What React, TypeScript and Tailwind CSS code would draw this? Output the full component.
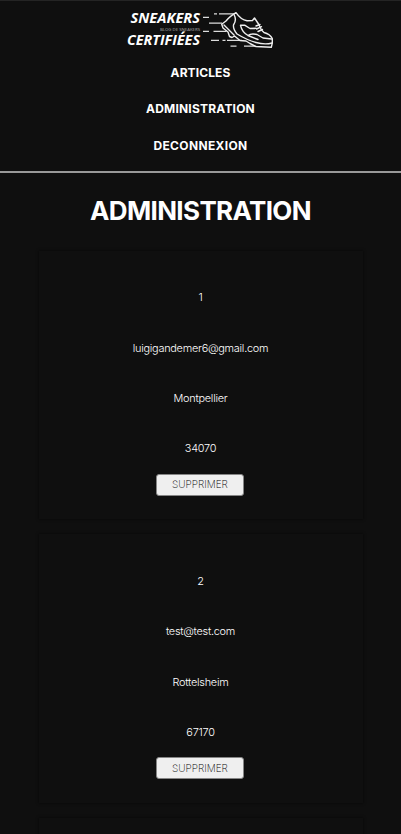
type User = { id: string; email: string; city: string; zip: string };

const users: User[] = [
  { id: '1', email: 'luigigandemer6@gmail.com', city: 'Montpellier', zip: '34070' },
  { id: '2', email: 'test@test.com', city: 'Rottelsheim', zip: '67170' },
];

function Logo() {
  return (
    <svg width="148" height="42" viewBox="126 8 148 42" className="-ml-px block" fill="none" role="img" aria-label="Sneakers certifiées">
      <g fill="#fff" fontFamily="'Open Sans', sans-serif">
        <text x="130.5" y="23" fontSize="14" fontWeight="700" fontStyle="italic" textLength="69.5" lengthAdjust="spacingAndGlyphs">SNEAKERS</text>
        <text x="160" y="30.8" fontSize="4.3" fill="#aaa" textLength="40" lengthAdjust="spacing">BLOG DE SNEAKERS</text>
        <text x="127" y="45" fontSize="14" fontWeight="700" fontStyle="italic" textLength="73" lengthAdjust="spacingAndGlyphs">CERTIFIÉES</text>
      </g>
      <g stroke="#ddd" strokeWidth="1.2">
        <path d="M203 17.4h6M214 13.8h3M219 13.8h15M209 23.2h13M203 31.4h6M213.5 31.4h13M211 40.4h8M222.5 40.4h3M227 40.4h15M230.5 46.2h6M244 46.2h11" />
      </g>
      <g stroke="#eee" strokeWidth="1.4" strokeLinejoin="round" strokeLinecap="round">
        <path d="M236 12.7Q229 17 226 21L221.7 24.3L223 28L228 32L229.5 36.5L232 37.5L234.5 36L240 40.5L246 41L250 43.5L256 46.5L271.3 47.3L272.3 43V38.5Q270 34 264 32.5L261.5 30L258.5 24L254.5 18L252.5 20.5L247 20.8Q241 20 236 12.7" />
        <path d="M234 14.5Q237 20 233.5 25Q233 29 237 34Q247 40 256 42.5T272 43M224 25L229 30L234 35" />
        <path d="M240.5 25.3L245 25.3L250 28.5L256 28.3M240.5 25.3Q242 32 248 35.5L258 39.5M248 35.5Q251 33 257 34.5L263 38L271.5 39M256 26L260 24.5M256.5 29L261.5 26.7M258 31.5L262.5 29.5" />
      </g>
    </svg>
  );
}

function UserCard({ user }: { user: User }) {
  return (
    <article className="flex h-[268.5px] shrink-0 flex-col items-center bg-[#0f0f0f] pt-[38.5px] text-[10.9px] font-light tracking-[-0.25px] text-white shadow-[0_0_3px_rgba(0,0,0,0.7)]">
      <p className="flex h-[17px] items-center">{user.id}</p>
      <p className="mt-[33.5px] flex h-[17px] items-center">{user.email}</p>
      <p className="mt-[33.2px] flex h-[17px] items-center">{user.city}</p>
      <p className="mt-[33px] flex h-[17px] items-center">{user.zip}</p>
      <button className="mt-[17px] -ml-px flex h-[22px] w-[88px] items-center justify-center rounded-[3px] border border-[#858585] bg-[#efefef] text-[10px] font-extralight tracking-normal text-black">
        SUPPRIMER
      </button>
    </article>
  );
}

export default function App() {
  return (
    <div className="h-[834px] overflow-hidden bg-[#0f0f0f] font-['Inter',sans-serif] text-white">
      <header className="flex h-[173px] flex-col items-center border-t border-b-2 border-t-[#242424] border-b-[#999] pt-[7px]">
        <Logo />
        <nav className="mt-[14px] flex flex-col items-center gap-[18.4px] text-[12px] leading-[18px] font-bold">
          <a className="tracking-[0.1px]">ARTICLES</a>
          <a className="tracking-[0.2px]">ADMINISTRATION</a>
          <a className="tracking-[0.35px]">DECONNEXION</a>
        </nav>
      </header>
      <main>
        <h1 className="mt-[18px] text-center text-[26px] leading-[40px] font-bold tracking-[-0.65px]">ADMINISTRATION</h1>
        <section className="mx-[38.5px] mt-[19.5px] flex flex-col gap-[15px]">
          {users.map((user) => (
            <UserCard key={user.id} user={user} />
          ))}
          <article className="h-[17px] bg-[#0f0f0f] shadow-[0_0_3px_rgba(0,0,0,0.7)]" />
        </section>
      </main>
    </div>
  );
}
